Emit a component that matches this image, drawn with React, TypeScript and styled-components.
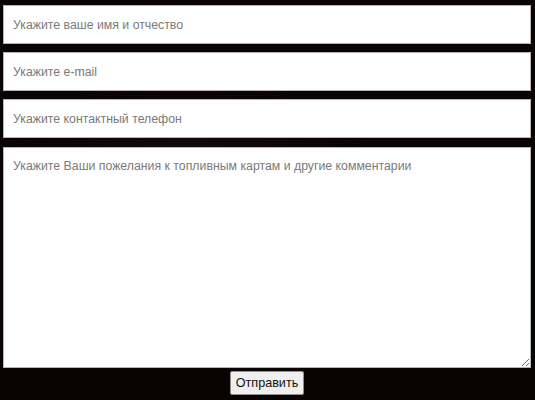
import React from 'react';
import styled, { createGlobalStyle } from 'styled-components';

const GlobalStyle = createGlobalStyle`
  html, body {
    margin: 0;
    padding: 0;
    background: #0a0304;
  }
  body {
    font-family: "Liberation Sans", Arial, sans-serif;
  }
`;

const Form = styled.form`
  display: flex;
  flex-direction: column;
  gap: 8px;
  padding: 5px 4px 3px 3px;
  width: 535px;
  height: 400px;
  box-sizing: border-box;
  background:
    radial-gradient(ellipse at 35% 48%, rgba(60, 40, 40, 0.25), transparent 40%),
    #0a0304;
`;

const Field = styled.input`
  height: 39px;
  box-sizing: border-box;
  border: 1px solid #b5b5b5;
  background: #fff;
  padding: 0 9px;
  font-family: "Liberation Sans", Arial, sans-serif;
  font-size: 12.3px;
  color: #333;
  outline: none;

  &::placeholder {
    color: #7a7a7a;
  }
`;

const Comments = styled.textarea`
  height: 221px;
  margin-top: 1px;
  box-sizing: border-box;
  border: 1px solid #b5b5b5;
  background: #fff;
  padding: 11px 9px;
  font-family: "Liberation Sans", Arial, sans-serif;
  font-size: 12.3px;
  color: #333;
  outline: none;
  resize: vertical;
  margin-bottom: -5px;

  &::placeholder {
    color: #7a7a7a;
  }
`;

const SubmitRow = styled.div`
  display: flex;
  justify-content: center;
`;

const SubmitButton = styled.button`
  height: 24px;
  width: 74px;
  padding: 0;
  border: 1px solid #8f8f8f;
  border-radius: 2px;
  background: #efefef;
  font-family: "Liberation Sans", Arial, sans-serif;
  font-size: 12.6px;
  color: #111;
  cursor: pointer;
`;

const App: React.FC = () => {
  return (
    <>
      <GlobalStyle />
      <Form onSubmit={(e) => e.preventDefault()}>
        <Field type="text" placeholder="Укажите ваше имя и отчество" />
        <Field type="email" placeholder="Укажите e-mail" />
        <Field type="tel" placeholder="Укажите контактный телефон" />
        <Comments placeholder="Укажите Ваши пожелания к топливным картам и другие комментарии" />
        <SubmitRow>
          <SubmitButton type="submit">Отправить</SubmitButton>
        </SubmitRow>
      </Form>
    </>
  );
};

export default App;
